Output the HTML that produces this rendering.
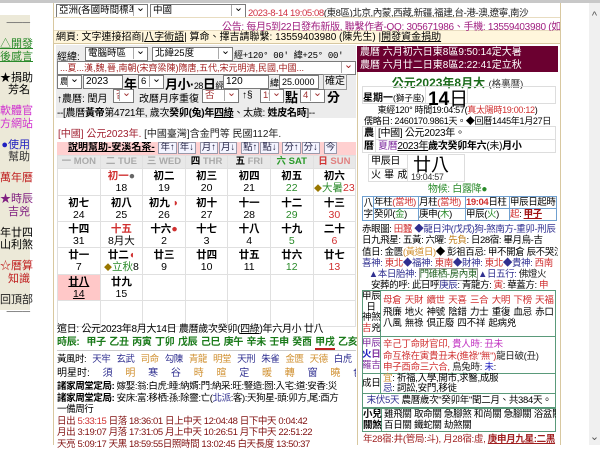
<!DOCTYPE html>
<html><head><meta charset="utf-8">
<style>
*{margin:0;padding:0;box-sizing:border-box}
body{width:600px;height:445px;overflow:hidden;background:#fff;font-family:"Liberation Sans","Noto Sans CJK TC","WenQuanYi Zen Hei",sans-serif;font-size:10px;color:#000;position:relative}
.a{position:absolute;white-space:nowrap}
.sel{position:absolute;border:1px solid #7a7a7a;background:#fff;height:14px;font-size:9.5px;line-height:12px;padding-left:2px;overflow:hidden;white-space:nowrap}
.sel:after{content:"⌄";position:absolute;right:0;top:-3px;width:13px;height:14px;border-left:1px solid #aaa;text-align:center;font-size:11px;background:#fff}
.inp{position:absolute;border:1px solid #7a7a7a;background:#fff;height:14px;font-size:10px;line-height:12px;padding-left:2px}
.side div{text-align:right;font-size:11px;line-height:12.5px;margin-bottom:8.5px}
table{border-collapse:collapse}
.cal td{width:42.6px;height:26px;border:1px solid #e0e0e0;text-align:center;vertical-align:top;font-size:10.5px;line-height:12px;padding-top:1px;white-space:nowrap;overflow:hidden}
.cal b{display:block;font-size:10.5px}
.g{color:#2a8a2a}.r{color:#d03030}
.btn{display:inline-block;border:1px solid #99a;background:#f4f4ff;color:#224;font-size:9.5px;line-height:10px;padding:0 1px;margin-left:1px}
.rt{position:absolute;font-size:10px;line-height:11.3px;white-space:nowrap;letter-spacing:-0.3px}
</style></head><body>
<div class="a" style="left:0;top:0;width:600px;height:3px;background:#c8c8c8"></div>
<div class="a side" style="left:0;top:15px;width:30px;height:295px;background:#ece9d8;padding-top:2px">
<div style="color:#666">───</div>
<div style="color:#2a8a2a;text-decoration:underline">△開發<br>後感言</div>
<div>★捐助<br>芳名</div>
<div style="color:#d030d0">軟體官<br>方網站</div>
<div style="color:#2020c0">●使用<br><span style="color:#333">幫助</span></div>
<div style="color:#c02020">萬年曆</div>
<div style="color:#802080">★時辰<br>吉兇</div>
<div>年廿四<br>山利煞</div>
<div style="color:#c02020">☆曆算<br>知識</div>
<div style="color:#222;margin-bottom:0">回頂部</div>
<div style="color:#666">───</div>
</div>
<div class="a" style="left:53px;top:3px;width:508px;height:442px;border-left:1px solid #d8c8a0;border-right:1px solid #d8c8a0"></div>
<div class="sel" style="left:56px;top:4px;width:92px">亞洲(各國時間標準)</div>
<div class="sel" style="left:150px;top:4px;width:96px">中國</div>
<div class="a" style="left:248px;top:5px;width:312px;overflow:hidden;font-size:9.5px;letter-spacing:-0.4px;color:#d03040">2023-8-14 19:05:08<span style="color:#222">(東8區)北京,內蒙,西藏,新疆,福建,台-港-澳,遼寧,南沙</span></div>
<div class="a" style="left:54px;top:17px;width:506px;height:14px;border-top:1px solid #e8dcc0;border-bottom:1px solid #e8dcc0"></div>
<div class="a" style="left:222px;top:18px;width:338px;overflow:hidden;font-size:10px;letter-spacing:-0.3px;color:#a02080">公告: 每月5到22日發布新版, 聯繫作者-QQ: 305671986、手機: 13559403980 (如何</div>
<div class="a" style="left:54px;top:31px;width:506px;height:13px;background:#fff6dc;border-bottom:1px solid #d8c8a0;font-size:10px;line-height:13px;padding-left:2px">網頁: 文字連接招商|<u>八字術語</u>| 算命、擇吉請聯繫: 13559403980 (陳先生) |<u>開發資金捐助</u></div>
<div class="a" style="left:56px;top:45px;width:300px;height:73px;background:#ececec"></div>
<div class="a" style="left:57px;top:48px">經緯:</div>
<div class="sel" style="left:85px;top:47px;width:63px">電腦時區</div>
<div class="sel" style="left:152px;top:47px;width:81px">北緯25度</div>
<div class="a" style="left:234px;top:48px;font-size:9px;letter-spacing:-0.3px;font-family:'Liberation Mono','Noto Sans CJK TC',monospace">經+120° 00′ 緯+25° 00′</div>
<div class="sel" style="left:57px;top:61px;width:299px;color:#a02020;font-size:9px">...夏...漢,魏,晉,南朝(宋齊梁陳)隋唐,五代,宋元明清,民國,中國...</div>
<div class="sel" style="left:57px;top:75px;width:25px;font-size:8px">農曆</div>
<div class="inp" style="left:83px;top:75px;width:40px">2023</div>
<div class="a" style="left:124px;top:74px;font-size:13px;font-weight:bold">年</div>
<div class="sel" style="left:138px;top:75px;width:26px">6</div>
<div class="a" style="left:165px;top:74px;font-size:13px;font-weight:bold;letter-spacing:-0.5px">月小·<span style="font-size:9px;font-weight:normal">28</span>日<span style="font-size:9px;font-weight:normal">經</span></div>
<div class="inp" style="left:223px;top:75px;width:46px">120</div>
<div class="a" style="left:270px;top:76px;font-size:9px">緯</div>
<div class="inp" style="left:279px;top:75px;width:40px;font-size:9px">25.0000</div>
<div class="a" style="left:323px;top:74px;width:24px;height:16px;border:1px solid #999;background:#f0f0f0;font-size:10px;text-align:center;line-height:14px">確定</div>
<div class="a" style="left:57px;top:90px">↑農曆: 閏月</div>
<div class="sel" style="left:113px;top:89px;width:21px;color:#a03030">否</div>
<div class="a" style="left:139px;top:90px">改曆月序重復</div>
<div class="sel" style="left:202px;top:89px;width:37px;color:#a03030">否</div>
<div class="a" style="left:242px;top:90px">↑§</div>
<div class="sel" style="left:260px;top:89px;width:24px;color:#a03030">19</div>
<div class="a" style="left:285px;top:87px;font-size:13px;font-weight:bold">點</div>
<div class="sel" style="left:300px;top:89px;width:25px;color:#a03030">4</div>
<div class="a" style="left:327px;top:87px;font-size:13px;font-weight:bold">分</div>
<div class="a" style="left:57px;top:104px;letter-spacing:-0.3px">--[農曆<b>黃帝</b>第4721年, 歲次<b>癸卯(兔)年<u>四綠</u></b>、太歲: <b>姓皮名時</b>]--</div>
<div class="a" style="left:58px;top:125px;color:#a02030">[中國] 公元2023年. <span style="color:#222">[中國臺灣]含金門等 民國112年.</span></div>
<div class="a" style="left:57px;top:142px;width:299px;height:13px;background:#ffd0d0;font-size:10px;line-height:12px;padding-left:11px;overflow:hidden"><b><u>說明幫助-安溪名茶-</u></b> <span class="btn">年↑</span><span class="btn">年↓</span> <span class="btn">月↑</span><span class="btn">月↓</span> <span class="btn">點↑</span><span class="btn">點↓</span> <span class="btn">分↑</span><span class="btn">分↓</span> <span class="btn">今</span></div>
<table class="cal a" style="left:57px;top:155px;width:299px;table-layout:fixed">
<tr style="background:#e8e8e8"><td style="height:13px;color:#aaa;font-weight:bold;font-size:9.5px;padding:0">一 MON</td><td style="height:13px;color:#aaa;font-weight:bold;font-size:9.5px;padding:0">二 TUE</td><td style="height:13px;color:#aaa;font-weight:bold;font-size:9.5px;padding:0">三 WED</td><td style="height:13px;font-size:9.5px;padding:0;font-weight:bold">四 <span style="color:#aaa">THR</span></td><td style="height:13px;font-size:9.5px;padding:0;font-weight:bold">五 <span style="color:#aaa">FRI</span></td><td style="height:13px;font-size:9.5px;padding:0;font-weight:bold;color:#2a9a2a">六 SAT</td><td style="height:13px;font-size:9.5px;padding:0;font-weight:bold;color:#d03030">日 <span style="color:#e08080">SUN</span></td></tr>
<tr><td></td><td><b><span class="r">初一</span><span style="color:#666">●</span></b>18</td><td><b>初二</b>19</td><td><b>初三</b>20</td><td><b>初四</b>21</td><td><b>初五</b><span class="g">22</span></td><td><b>初六</b><span style="color:#997700;font-size:8px">◆</span><span class="g">大暑</span><span class="r">23</span></td></tr>
<tr><td><b>初七</b>24</td><td><b>初八</b>25</td><td><b>初九 <span class="r">◗</span></b>26</td><td><b>初十</b>27</td><td><b>十一</b>28</td><td><b>十二</b><span class="g">29</span></td><td><b>十三</b><span class="r">30</span></td></tr>
<tr><td><b>十四</b>31</td><td><b class="r">十五</b>8月大</td><td><b>十六<span class="r">●</span></b>2</td><td><b>十七</b>3</td><td><b>十八</b>4</td><td><b>十九</b><span class="g">5</span></td><td><b>二十</b><span class="r">6</span></td></tr>
<tr><td><b>廿一</b>7</td><td><b>廿二<span class="r">◖</span></b><span style="color:#997700;font-size:8px">◆</span><span class="g">立秋</span>8</td><td><b>廿三</b>9</td><td><b>廿四</b>10</td><td><b>廿五</b>11</td><td><b>廿六</b><span class="g">12</span></td><td><b>廿七</b><span class="r">13</span></td></tr>
<tr><td style="background:#ffc8c8"><b><u>廿八</u></b><u>14</u></td><td><b>廿九</b>15</td><td></td><td></td><td></td><td></td><td></td></tr>
<tr><td></td><td></td><td></td><td></td><td></td><td></td><td></td></tr>
</table>
<div class="a" style="left:57px;top:323px;font-size:10px;line-height:13px;letter-spacing:-0.3px">
<div>逭日: 公元2023年8月大14日 農曆歲次癸卯(<u>四綠</u>)年六月小 廿八</div>
<div style="color:#1a7a1a;font-weight:bold;font-size:10px;word-spacing:1px">時辰: &nbsp;甲子 乙丑 丙寅 丁卯 戊辰 己巳 庚午 辛未 壬申 癸酉 <span style="border-bottom:2px solid #c02020">甲戌</span> 乙亥</div>
</div>
<div class="a" style="left:57px;top:350px;width:299px;border-top:1px solid #ccc"></div>
<div class="a" style="left:57px;top:353px;width:299px;overflow:hidden;font-size:9.5px;line-height:13px;word-spacing:4px;letter-spacing:-0.5px">黃風时: <span style="color:#303090">天牢 玄武</span> <span style="color:#d09030">司命</span> <span style="color:#303090">勾陳</span> <span style="color:#d09030">青龍 明堂</span> <span style="color:#303090">天刑 朱雀</span> <span style="color:#d09030">金匮 天德</span> <span style="color:#303090">白虎</span> <span style="color:#d09030">玉堂</span></div>
<div class="a" style="left:57px;top:367px;width:299px;overflow:hidden;font-size:10px;line-height:13px;word-spacing:10px">明星时: <span style="color:#303090">須</span> <span style="color:#d09030">明</span> <span style="color:#303090">寒 谷</span> <span style="color:#d09030">時 暄</span> <span style="color:#303090">定</span> <span style="color:#d09030">暖 轉</span> <span style="color:#303090">窗</span> <span style="color:#d09030">曉</span> <span style="color:#303090">色</span></div>
<div class="a" style="left:57px;top:381px;width:299px;overflow:hidden;font-size:9.5px;line-height:11.5px;letter-spacing:-0.4px">
<div><b>諸家周堂定局:</b> 嫁娶:翁:白虎:睡:納婿:門:納采:旺:豎造:囫:入宅:道:安香:災</div>
<div><b>諸家周堂定局:</b> 安床:富:移栖:孫:除靈:亡(<span style="color:#303090">北派</span>:客):天狗星-頭:卯方,尾:酉方</div>
<div>一備周行</div>
<div style="color:#801010">日出 <span class="r">5:33:15</span> 日落 18:36:01 日上中天 12:04:48 日下中天 0:04:42</div>
<div style="color:#801010">月出 3:19:07 月落 17:31:05 月上中天 10:26:51 月下中天 22:51:22</div>
<div style="color:#801010">天亮 5:09:17 天黑 18:59:55日照時間 13:02:45 白天長度 13:50:37</div>
</div>
<div class="a" style="left:357px;top:46px;width:201px;height:26px;background:#6b0030;color:#fff;font-size:10px;line-height:12.5px;padding-left:3px;padding-top:1px">農曆 六月初六日東8區9:50:14定大暑<br>農曆 六月廿二日東8區2:22:41定立秋</div>
<div class="a" style="left:357px;top:72px;width:201px;height:373px;border-left:1px solid #d8c8a0"></div>
<div class="a" style="left:357px;top:74px;width:201px;text-align:center;font-size:12px;font-weight:bold;color:#1a6a1a">公元2023年8月大 <span style="font-size:9.5px;font-weight:normal;color:#333">(格裏曆)</span></div>
<div class="a" style="left:362px;top:86px;width:194px;height:18px;border:1px solid #ddd"></div>
<div class="a" style="left:363px;top:89px;font-size:10px;font-weight:bold">星期一<span style="font-weight:normal;font-size:8.5px">(獅子座)</span></div>
<div class="a" style="left:425px;top:86px;width:1px;height:18px;background:#ddd"></div>
<div class="a" style="left:428px;top:84px;font-size:19px;font-weight:bold">14<span style="font-weight:normal">日</span></div>
<div class="a" style="left:467px;top:86px;width:1px;height:18px;background:#ddd"></div>
<div class="rt" style="left:357px;top:105px;width:201px;text-align:center;font-size:9px">東經120° 時間19:04:57(<span class="r">真太陽時19:00:12</span>)</div>
<div class="rt" style="left:357px;top:116px;width:201px;text-align:center;font-size:9px">儒略日: 2460170.9861天。◆回曆1445年1月27日</div>
<div class="a" style="left:362px;top:126px;width:194px;height:27px;border:1px solid #ddd"></div>
<div class="rt" style="left:364px;top:128px;font-weight:bold;line-height:12.5px">農<br>曆</div>
<div class="a" style="left:375px;top:127px;width:1px;height:25px;background:#ddd"></div>
<div class="a" style="left:375px;top:139px;width:181px;height:1px;background:#ddd"></div>
<div class="rt" style="left:378px;top:128px">[中國] 公元2023年。</div>
<div class="rt" style="left:378px;top:141px"><span style="color:#8030a0">夏曆</span><u>2023年</u><b>歲次癸卯年六</b>(未)<b>月小</b></div>
<div class="a" style="left:368px;top:154px;width:97px;height:28px;border:1px solid #ddd"></div>
<div class="a" style="left:407px;top:154px;width:1px;height:28px;background:#ddd"></div>
<div class="a" style="left:368px;top:168px;width:40px;height:1px;background:#ddd"></div>
<div class="rt" style="left:371px;top:156px">甲辰日</div>
<div class="rt" style="left:371px;top:170px;word-spacing:1px">火 畢 成</div>
<div class="a" style="left:413px;top:151px;font-size:18px">廿八</div>
<div class="rt" style="left:411px;top:172px;font-size:9px;color:#333">19:04:57</div>
<div class="rt" style="left:357px;top:184px;width:201px;text-align:center;color:#2a8a2a">物候: 白露降●</div>
<table class="a" style="left:362px;top:196px;width:194px;font-size:9.5px;line-height:11px;table-layout:fixed;letter-spacing:-0.4px;white-space:nowrap">
<col style="width:11px"><col style="width:45px"><col style="width:47px"><col style="width:44px"><col style="width:47px">
<tr><td rowspan="2" style="border:1px solid #6fa0d0;text-align:center">八<br>字</td><td style="border:1px solid #6fa0d0;overflow:hidden">年柱<span class="r">(當地)</span></td><td style="border:1px solid #6fa0d0;overflow:hidden">月柱<span class="r">(當地)</span></td><td style="border:1px solid #6fa0d0;overflow:hidden"><b class="r">19:04</b>日柱</td><td style="border:1px solid #6fa0d0;overflow:hidden">甲辰日起時</td></tr>
<tr><td style="border:1px solid #6fa0d0">癸卯(<span class="g">金</span>)</td><td style="border:1px solid #6fa0d0">庚申(<span class="g">木</span>)</td><td style="border:1px solid #6fa0d0">甲辰(<span class="g">火</span>)</td><td style="border:1px solid #6fa0d0"><span class="r">起</span>: <b style="color:#a01010"><u>甲子</u></b></td></tr>
</table>
<div class="rt" style="left:362px;top:224px;width:196px;overflow:hidden;font-size:9.5px;letter-spacing:-0.4px">
<div>赤眼圖: <span class="r">田蠶</span> <span style="color:#303090">◆龍日沖(戊戌)狗-煞南方-重卯-刑辰</span></div>
<div>日九飛星: 五黃: 六曜: <span style="color:#c08020">先負</span>: 日28宿: 畢月烏-吉</div>
<div>值日: 金匮<span style="color:#d09030">(黃道日)</span>◆ 彭祖百忌: 甲不開倉 辰不哭泣</div>
<div style="color:#303090">喜神: <span class="r">東北</span>◆福神: <span class="r">東南</span>◆財神: <span class="r">東北</span>◆貴神: <span class="r">西南</span></div>
<div style="color:#303090">&nbsp;&nbsp;&nbsp;▲本日胎神: <span style="color:#206020;border:1px solid #999">門碓栖-房內東</span>▲日五行: <span style="color:#222">佛燈火</span></div>
<div>&nbsp;&nbsp;&nbsp;&nbsp;安葬的呼: 此日呼<span style="color:#303090">庚辰</span>: 青龍方: <span class="r">寅</span>: 華蓋方: <span class="r">申</span></div>
</div>
<div class="a" style="left:362px;top:290px;width:194px;height:118px;border:1px solid #5a9a7a"></div>
<div class="a" style="left:362px;top:336px;width:194px;height:1px;background:#5a9a7a"></div>
<div class="a" style="left:362px;top:373px;width:194px;height:1px;background:#5a9a7a"></div>
<div class="a" style="left:362px;top:393px;width:194px;height:1px;background:#5a9a7a"></div>
<div class="a" style="left:380px;top:290px;width:1px;height:103px;background:#5a9a7a"></div>
<div class="rt" style="left:362px;top:292px;width:18px;text-align:center;line-height:10.5px;font-size:9.5px">甲辰<br>日<br>神煞<br><span class="r">吉</span>兇</div>
<div class="rt" style="left:383px;top:295px;width:172px;overflow:hidden;line-height:11.5px;font-size:9.5px;word-spacing:1px"><span class="r">母倉 天財 續世 天喜 三合 大明 下榜 天福</span><br>飛廉 地火 神號 陰錯 力士 重復 血忌 赤口<br>八風 無祿 倶正廢 四不祥 起病兇</div>
<div class="rt" style="left:362px;top:338px;width:18px;text-align:center;line-height:11px;font-weight:bold;font-size:9.5px"><span style="color:#8030a0;font-weight:normal">甲辰</span><br><span style="color:#2020c0">火</span><span style="color:#8030a0">日</span><br><span style="color:#8030a0;font-weight:normal">羅吉</span></div>
<div class="rt" style="left:383px;top:339px;line-height:11.5px;color:#d03030;font-size:9.5px">辛己丁命財官印, <span style="color:#c030c0">貴人時: 丑未</span><br>命互祿在寅貴丑未(進祿"無")<span style="color:#222">龍日破(丑)</span><br>申子酉命三六合, <span style="color:#222">鳥兔時: <span style="color:#2020c0">未</span>:</span></div>
<div class="rt" style="left:362px;top:378px;width:18px;text-align:center;font-size:9.5px">成日</div>
<div class="rt" style="left:383px;top:374px;line-height:9.5px;font-size:9.5px"><span style="color:#d09030">宜</span>: 祈福,入學,開市,求醫,成服<br><span style="color:#303090">忌</span>: 詞訟,安門,移徙</div>
<div class="rt" style="left:362px;top:395px;width:194px;text-align:center;font-size:9.5px"><span style="color:#303090">末伏5天</span> 農曆歲次"癸卯年"閏二月、共384天。</div>
<div class="a" style="left:362px;top:408px;width:194px;height:24px;border:1px solid #5a9a7a"></div>
<div class="a" style="left:381px;top:408px;width:1px;height:24px;background:#5a9a7a"></div>
<div class="rt" style="left:363px;top:409px;font-weight:bold;line-height:11px;font-size:9.5px">小兒<br>關煞</div>
<div class="rt" style="left:384px;top:409px;width:172px;overflow:hidden;line-height:11px;font-size:9.5px">雞飛關 取命關 急腳煞 和尚關 急腳關 浴盆關<br>百日關 鐵蛇關 劫煞關</div>
<div class="rt" style="left:362px;top:434px;width:194px;text-align:center;color:#a02020;font-size:9.5px">年28宿:井(管局:斗), 月28宿:虛, <b><u>庚申月九星:二黑</u></b></div>
<div class="a" style="left:589px;top:3px;width:11px;height:442px;background:#f0f0f0"></div>
<div class="a" style="left:589px;top:10px;width:11px;text-align:center;font-size:11px;color:#555">^</div>
<div class="a" style="left:589px;top:430px;width:11px;text-align:center;font-size:11px;color:#555">⌄</div>
</body></html>
